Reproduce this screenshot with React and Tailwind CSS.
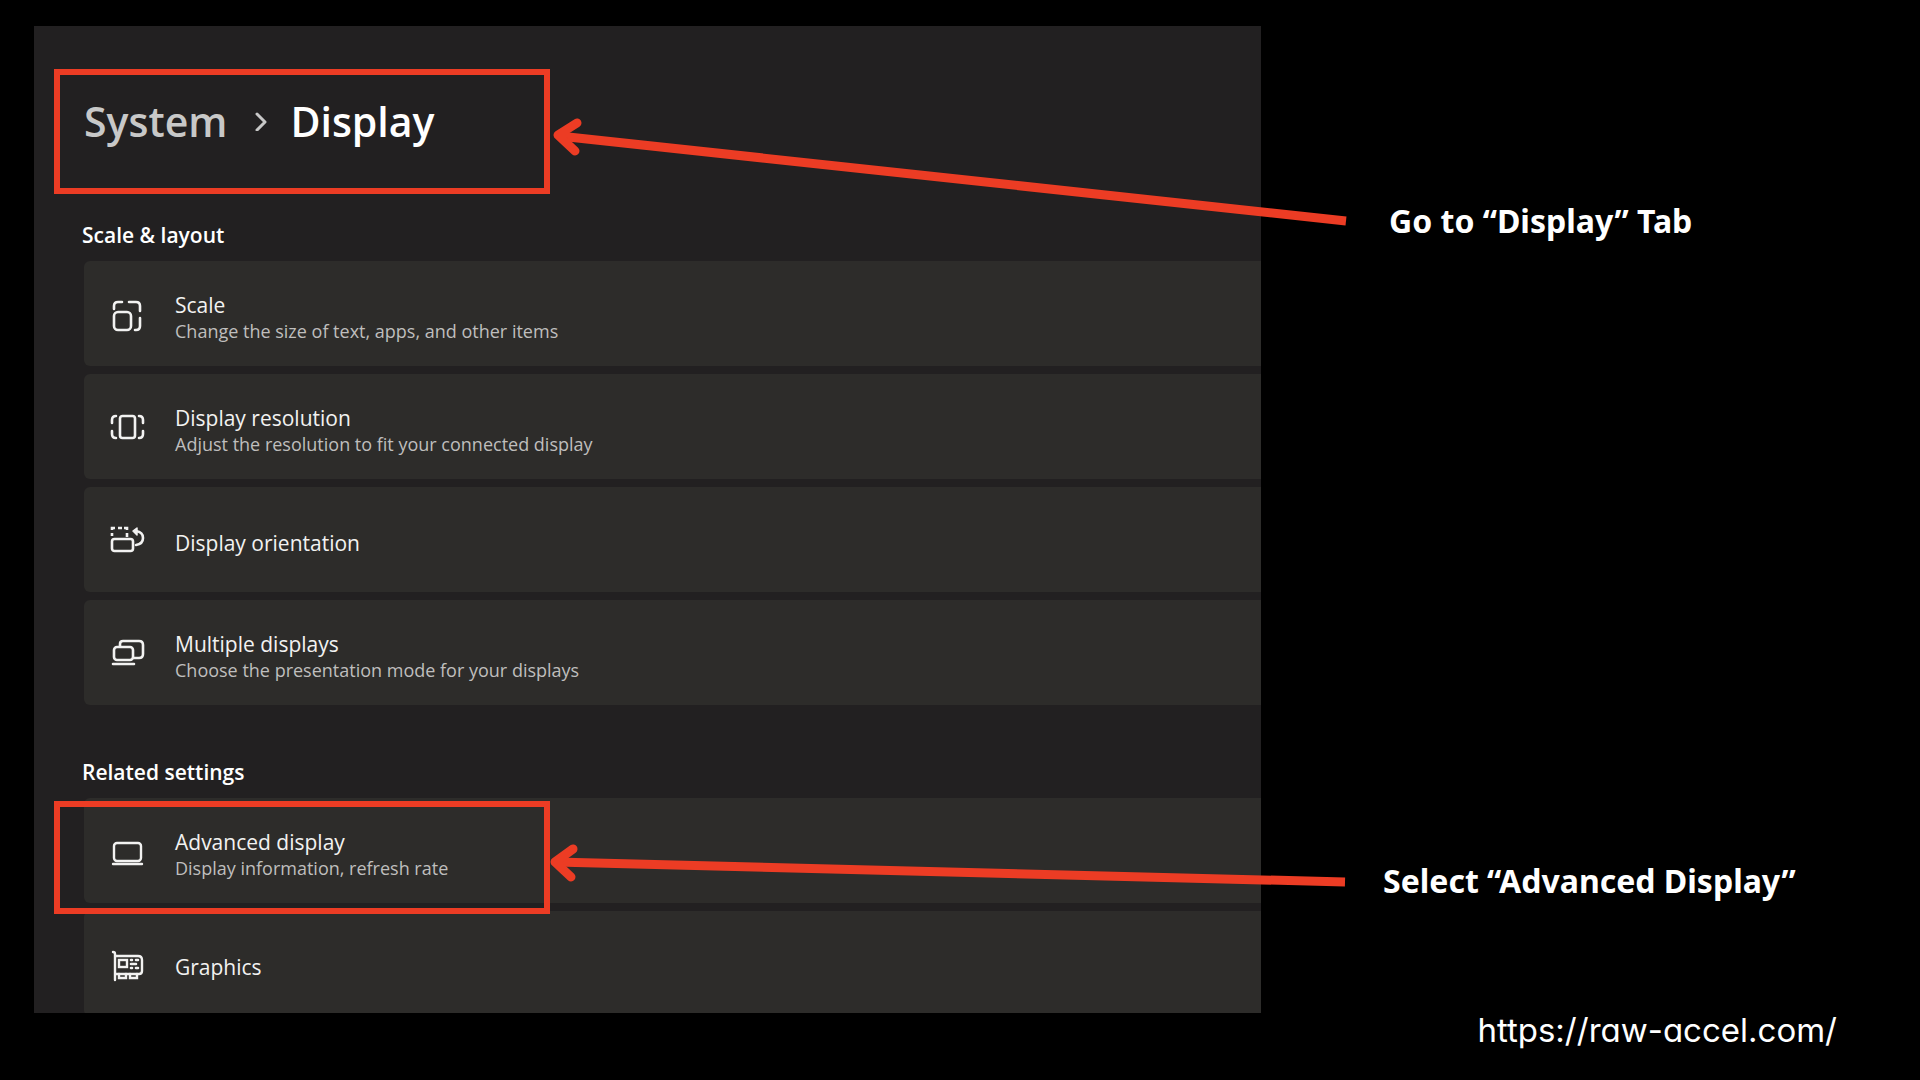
import React from 'react';

const ScaleIcon = () => (
  <svg viewBox="0 0 36 36" className="size-9 shrink-0" fill="none" stroke="currentColor" strokeWidth="2.6" strokeLinecap="round">
    <path d="M5 10V7q0-4 4-4h4M20 3h7q4 0 4 4v5M31 19v8q0 4-4 4h-1" />
    <rect x="5" y="13" width="17" height="18" rx="4" />
  </svg>
);

const ResolutionIcon = () => (
  <svg viewBox="0 0 36 36" className="size-9 shrink-0" fill="none" stroke="currentColor" strokeWidth="2.6" strokeLinecap="round">
    <rect x="11" y="4" width="15" height="22" rx="2.5" />
    <path d="M7 4q-4 0-4 4v3M3 19v3q0 4 4 4M30 4q4 0 4 4v3M34 19v3q0 4-4 4" />
  </svg>
);

const OrientationIcon = () => (
  <svg viewBox="0 0 36 36" className="size-9 shrink-0" fill="none" stroke="currentColor" strokeWidth="2.6">
    <rect x="3" y="14" width="21" height="12" rx="2.5" />
    <path d="M3 11V8M3 5V3h3M9 3h4M15 3h3v2M18 8v4" />
    <path d="M27 6q7 1 7 7T27 20" strokeLinecap="round" />
    <path d="M28 3l-4 3 4 4z" fill="currentColor" strokeWidth="1.5" strokeLinejoin="round" />
  </svg>
);

const MultipleIcon = () => (
  <svg viewBox="0 0 36 36" className="size-9 shrink-0" fill="none" stroke="currentColor" strokeWidth="2.6" strokeLinecap="round">
    <rect x="5" y="9" width="19" height="13" rx="3" />
    <path d="M11 8V6q0-3 3-3h16q4 0 4 4v9q0 4-4 4h-5M4 26h21" />
  </svg>
);

const AdvancedIcon = () => (
  <svg viewBox="0 0 36 36" className="size-9 shrink-0" fill="none" stroke="currentColor" strokeWidth="2.4" strokeLinecap="round">
    <rect x="5" y="7" width="27" height="18" rx="3" />
    <path d="M4 28h29" />
  </svg>
);

const GraphicsIcon = () => (
  <svg viewBox="0 0 36 36" className="size-9 shrink-0" fill="none" stroke="currentColor" strokeWidth="2.4" strokeLinecap="round">
    <path d="M4 3q2 0 2 2v26M6 7h23q4 0 4 4v11q0 3-3 3H6" />
    <rect x="10" y="11" width="8" height="7" />
    <path d="M10 25v4h7v-4M21 25v4h7v-4" />
    <path d="M22 11h1M27 11h2M22 15h5M22 19h1M27 19h2" strokeWidth="2.6" />
  </svg>
);

const layoutSettings = [
  { title: 'Scale', detail: 'Change the size of text, apps, and other items', Icon: ScaleIcon },
  { title: 'Display resolution', detail: 'Adjust the resolution to fit your connected display', Icon: ResolutionIcon },
  { title: 'Display orientation', Icon: OrientationIcon },
  { title: 'Multiple displays', detail: 'Choose the presentation mode for your displays', Icon: MultipleIcon },
];

const relatedSettings = [
  { title: 'Advanced display', detail: 'Display information, refresh rate', Icon: AdvancedIcon, highlighted: true },
  { title: 'Graphics', Icon: GraphicsIcon },
];

const SettingCard = ({ title, detail, Icon, highlighted }) => (
  <li className="relative">
    <button type="button" className="flex h-[105px] w-full items-center gap-[30px] rounded-l-md bg-[#2d2c2a] pt-1.5 pl-[25px] text-left text-[#f2f2f1]">
      <Icon />
      <span>
        <span className="block text-[21px] leading-7">{title}</span>
        {detail && <span className="block text-[18px] leading-6 text-[#bfbebd]">{detail}</span>}
      </span>
    </button>
    {highlighted && (
      <span className="pointer-events-none absolute top-[3px] -left-[30px] z-10 h-[113px] w-[496px] border-6 border-[#ec3c24]" />
    )}
  </li>
);

const SettingGroup = ({ heading, items, className }) => (
  <section className={className}>
    <h2 className="mb-3 -ml-0.5 text-[21px] leading-7 font-semibold text-white">{heading}</h2>
    <ul className="flex flex-col gap-2">
      {items.map(item => (
        <SettingCard key={item.title} {...item} />
      ))}
    </ul>
  </section>
);

const Arrows = () => (
  <svg viewBox="0 0 1920 1080" className="pointer-events-none absolute inset-0 z-20 h-full w-full" fill="none" stroke="#ec3c24" strokeWidth="9" strokeLinejoin="round">
    <path d="M559 136L1346 221" />
    <path d="M577 123L558 135L575 151" strokeLinecap="round" />
    <path d="M556 862L1345 882" />
    <path d="M573 849L555 862L571 877" strokeLinecap="round" />
  </svg>
);

const App = () => {
  return (
    <div className="relative grid min-h-screen grid-cols-[1227fr_659fr] items-start bg-black pt-[26px] pl-[34px] font-['Open_Sans',sans-serif]">
      {/* the last card runs off the bottom edge of the window */}
      <main className="overflow-hidden bg-[#222021] pt-[43px]">
        <nav className="ml-5 w-[496px] border-6 border-[#ec3c24] pt-[18px] pb-[39px] pl-6">
          <ol className="flex items-center text-[41px] leading-14 font-semibold">
            <li><a href="#system" className="text-[#c8c8c8]">System</a></li>
            <li aria-hidden="true" className="mr-5 ml-[25px]">
              <svg viewBox="0 0 18 20" className="h-5 w-[18px]" fill="none" stroke="#c8c8c8" strokeWidth="3" strokeLinecap="round" strokeLinejoin="round">
                <path d="M5 3l8 8-8 8" />
              </svg>
            </li>
            <li><h1 className="text-white">Display</h1></li>
          </ol>
        </nav>
        <SettingGroup heading="Scale & layout" items={layoutSettings} className="mt-[27px] ml-[50px]" />
        <SettingGroup heading="Related settings" items={relatedSettings} className="mt-[53px] -mb-[3px] ml-[50px]" />
      </main>

      <aside className="flex flex-col font-['Noto_Sans',sans-serif] text-white">
        <p className="mt-[175px] ml-[128px] text-[32px] leading-10 font-bold">Go to “Display” Tab</p>
        <p className="mt-[620px] ml-[122px] text-[32px] leading-10 font-bold">Select “Advanced Display”</p>
        <a href="https://raw-accel.com/" className="mt-[109px] mr-[83px] self-end font-[Inter] text-[33px] leading-10 [font-feature-settings:'cv11']">
          https://raw-accel.com/
        </a>
      </aside>

      <Arrows />
    </div>
  );
};

export default App;
